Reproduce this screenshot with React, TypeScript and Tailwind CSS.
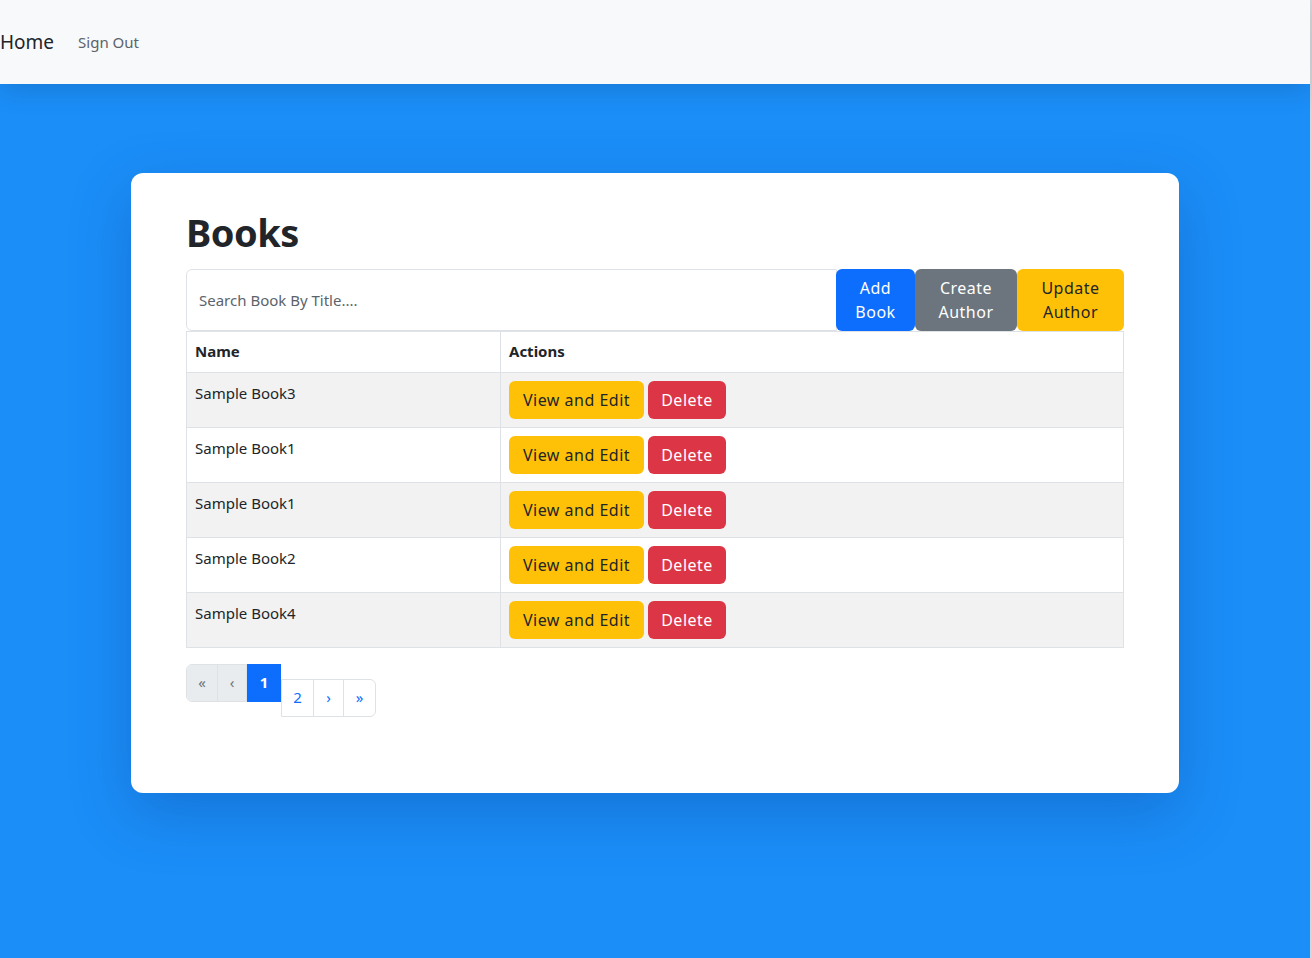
import { useState } from "react";

const books = ["Sample Book3", "Sample Book1", "Sample Book1", "Sample Book2", "Sample Book4"];

export default function App() {
  const [query, setQuery] = useState("");

  return (
    <div className="min-h-[958px] flex flex-col bg-[#1b8ef8] border-r-2 border-[#d4d6d9] font-['Noto_Sans',sans-serif] text-[#212529]">
      <nav className="h-[84px] shrink-0 bg-[#f8f9fa] flex items-center gap-6 shadow-[0_8px_24px_rgba(0,0,0,0.12)] relative z-10">
        <a className="text-[19px] text-[#212529]">Home</a>
        <a className="text-[15px] text-[#5c636a]">Sign Out</a>
      </nav>

      <div className="flex-1 pt-[89px] px-[131px]">
        <div className="bg-white rounded-[12px] shadow-[0_20px_60px_rgba(0,40,120,0.25)] px-[55px] pt-[37px] pb-[76px]">
          <h1 className="text-[38px] font-bold leading-[1.2] mb-[13px] tracking-[-0.5px]">Books</h1>

          <div className="flex">
            <input
              value={query}
              onChange={(e) => setQuery(e.target.value)}
              placeholder="Search Book By Title...."
              className="flex-1 h-[62px] px-[12px] text-[15px] border border-[#dee2e6] rounded-l-[6px] outline-none placeholder:text-[#5c636a]"
            />
            <button className="w-[79px] bg-[#0d6efd] text-white text-[16px] leading-[24px] tracking-[0.5px] rounded-[6px] -ml-px">
              Add<br />Book
            </button>
            <button className="w-[102px] bg-[#6c757d] text-white text-[16px] leading-[24px] tracking-[0.5px] rounded-[6px]">
              Create<br />Author
            </button>
            <button className="w-[107px] bg-[#ffc107] text-[#212529] text-[16px] leading-[24px] tracking-[0.5px] rounded-[6px]">
              Update<br />Author
            </button>
          </div>

          <table className="w-full border-collapse text-[15px]">
            <thead>
              <tr className="h-[41px]">
                <th className="w-[314px] border border-[#dee2e6] text-left font-bold px-[8px]">Name</th>
                <th className="border border-[#dee2e6] text-left font-bold px-[8px]">Actions</th>
              </tr>
            </thead>
            <tbody>
              {books.map((b, i) => (
                <tr key={i} className={i % 2 === 0 ? "bg-[#f2f2f2] h-[55px]" : "bg-white h-[55px]"}>
                  <td className="border border-[#dee2e6] px-[8px] pt-[9px] align-top">{b}</td>
                  <td className="border border-[#dee2e6] px-[8px] align-middle">
                    <div className="flex gap-[4px]">
                      <button className="h-[38px] w-[135px] bg-[#ffc107] text-[#212529] text-[16px] tracking-[0.5px] rounded-[6px]">
                        View and Edit
                      </button>
                      <button className="h-[38px] w-[78px] bg-[#dc3545] text-white text-[16px] tracking-[0.5px] rounded-[6px]">
                        Delete
                      </button>
                    </div>
                  </td>
                </tr>
              ))}
            </tbody>
          </table>

          <div className="flex items-start mt-[16px] text-[15px]">
            <div className="flex h-[38px] border border-[#dee2e6] rounded-l-[6px] overflow-hidden">
              <span className="w-[31px] flex items-center justify-center bg-[#e9ecef] text-[#6c757d] border-r border-[#dee2e6]">«</span>
              <span className="w-[28px] flex items-center justify-center bg-[#e9ecef] text-[#6c757d]">‹</span>
            </div>
            <span className="w-[34px] h-[38px] flex items-center justify-center bg-[#0d6efd] text-white font-bold">1</span>
            <div className="flex h-[38px] mt-[15px] border border-[#dee2e6] rounded-r-[6px] text-[#0d6efd]">
              <span className="w-[32px] flex items-center justify-center border-r border-[#dee2e6]">2</span>
              <span className="w-[30px] flex items-center justify-center border-r border-[#dee2e6]">›</span>
              <span className="w-[31px] flex items-center justify-center">»</span>
            </div>
          </div>
        </div>
      </div>
    </div>
  );
}
